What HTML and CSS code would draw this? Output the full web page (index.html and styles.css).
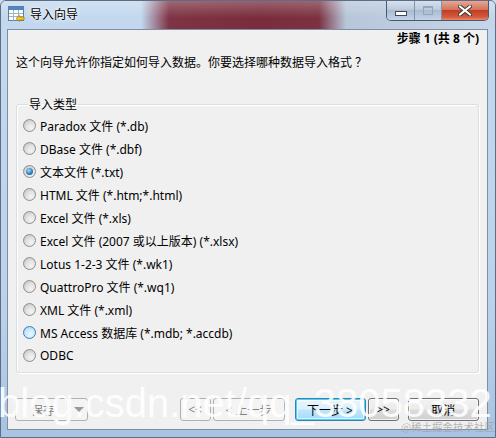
FILE: index.html
```html
<!DOCTYPE html>
<html lang="zh-CN">
  <head>
    <meta charset="UTF-8" />
    <title>导入向导</title>
    <link rel="stylesheet" href="styles.css">
  </head>
  <body>
    <div class="window">
      <!-- Title bar -->
      <div class="titlebar">
        <svg class="app-icon" width="17" height="17" viewBox="0 0 17 17">
          <rect x="0.5" y="0.5" width="15" height="14" fill="#ffffff" stroke="#5f7f9f" />
          <rect x="1" y="1" width="14" height="3" fill="#4a86c8" />
          <path d="M1 7.5H15M1 10.5H15M5.5 4V14.5M10.5 4V14.5" stroke="#9cb4cc" stroke-width="1" />
          <path d="M8 12.5L11.5 9.5V11H16V14H11.5V15.5Z" fill="#f2cc2a" stroke="#a8820a" stroke-width="0.8" />
        </svg>
        <span class="title">导入向导</span>
        <div class="caption-buttons">
          <div class="cap-btn cap-min"><span class="min-glyph"></span></div>
          <div class="cap-btn cap-max"><span class="max-glyph"></span></div>
          <div class="cap-btn cap-close">
            <svg width="14" height="11" viewBox="0 0 14 11">
              <path d="M2 1.5L12 9.5M12 1.5L2 9.5" stroke="#3b3b3b" stroke-width="4" stroke-linecap="square" />
              <path d="M2 1.5L12 9.5M12 1.5L2 9.5" stroke="#ffffff" stroke-width="2" stroke-linecap="square" />
            </svg>
          </div>
        </div>
      </div>

      <!-- Client area -->
      <div class="client">
        <div class="step">步骤 1 (共 8 个)</div>
        <p class="intro">这个向导允许你指定如何导入数据。你要选择哪种数据导入格式<span class="cjk">？</span></p>

        <fieldset class="group">
          <legend>导入类型</legend>
          <div class="option"><span class="radio"></span>Paradox 文件 (*.db)</div>
          <div class="option"><span class="radio"></span>DBase 文件 (*.dbf)</div>
          <div class="option"><span class="radio checked"></span>文本文件 (*.txt)</div>
          <div class="option"><span class="radio"></span>HTML 文件 (*.htm;*.html)</div>
          <div class="option"><span class="radio"></span>Excel 文件 (*.xls)</div>
          <div class="option"><span class="radio"></span>Excel 文件 (2007 或以上版本) (*.xlsx)</div>
          <div class="option"><span class="radio"></span>Lotus 1-2-3 文件 (*.wk1)</div>
          <div class="option"><span class="radio"></span>QuattroPro 文件 (*.wq1)</div>
          <div class="option"><span class="radio"></span>XML 文件 (*.xml)</div>
          <div class="option"><span class="radio hover"></span>MS Access 数据库 (*.mdb; *.accdb)</div>
          <div class="option"><span class="radio"></span>ODBC</div>
        </fieldset>

        <div class="footer">
          <div class="combo disabled">
            <span class="combo-text">保存</span>
            <span class="combo-arrow"></span>
          </div>
          <div class="nav nav-back">
            <div class="btn small disabled">&lt;&lt;</div>
            <div class="btn disabled">&lt; 上一步</div>
          </div>
          <div class="nav nav-next">
            <div class="btn default">下一步 &gt;</div>
            <div class="btn small">&gt;&gt;</div>
          </div>
          <div class="btn cancel">取消</div>
        </div>
      </div>
    </div>

    <!-- Image watermarks -->
    <div class="watermark">blog.csdn.net/qq_38058332</div>
    <div class="juejin">@稀土掘金技术社区</div>
  </body>
</html>
```

FILE: styles.css
```css
body {
  margin: 0;
  width: 496px;
  height: 438px;
  overflow: hidden;
  font-family: "Noto Sans", "Noto Sans CJK SC", sans-serif;
  font-size: 12px;
  color: #000;
  background: #c9dcf0;
  position: relative;
}
.cjk {
  font-family: "Noto Sans CJK SC", sans-serif;
  margin-left: 3px;
}
.window {
  width: 496px;
  height: 438px;
  box-sizing: border-box;
  display: flex;
  flex-direction: column;
  border: 1px solid #5a6f86;
  border-radius: 6px 6px 0 0;
  background: linear-gradient(to bottom, #c5d9ee, #bcd2ea 70%, #a9c3e0);
}
.titlebar {
  height: 28px;
  display: flex;
  align-items: flex-start;
  padding-left: 7px;
  background:
    linear-gradient(to bottom, rgba(255, 255, 255, 0.25), rgba(255, 255, 255, 0) 60%),
    linear-gradient(to right, #c3d8ee 0, #c3d8ee 140px, #7e3444 168px, #7a2c3c 260px, #7c3242 318px, #b7c6d9 345px, #c6d6e8 100%);
  border-radius: 5px 5px 0 0;
}
.app-icon {
  margin-top: 5px;
}
.title {
  margin: 6px 0 0 5px;
  font-size: 12px;
  line-height: 16px;
  text-shadow: 0 0 6px #fff, 0 0 3px #fff;
}
.caption-buttons {
  margin-left: auto;
  margin-right: 6px;
  display: flex;
  height: 19px;
  border: 1px solid #4a5a6e;
  border-top: none;
  border-radius: 0 0 5px 5px;
  overflow: hidden;
}
.cap-btn {
  display: flex;
  align-items: center;
  justify-content: center;
  height: 19px;
  background: linear-gradient(to bottom, #d6e1ee, #bccbdc 45%, #a9bbd1 50%, #c4d4e6);
}
.cap-min {
  width: 27px;
  border-right: 1px solid #7f93ab;
}
.cap-max {
  width: 26px;
  border-right: 1px solid #7f93ab;
}
.cap-close {
  width: 46px;
  background: linear-gradient(to bottom, #e8a695, #d4745d 45%, #c23d22 50%, #d45c3e 85%, #e88a6a);
}
.min-glyph {
  width: 10px;
  height: 3px;
  margin-top: 6px;
  background: #fff;
  border: 1px solid #3e4a58;
}
.max-glyph {
  width: 8px;
  height: 6px;
  border: 1px solid #8c9cb0;
  border-top-width: 2px;
  opacity: 0.8;
}

.client {
  flex: 1;
  margin: 0 7px 7px 6px;
  border: 1px solid #7d8fa5;
  background: #f0f0f0;
  display: flex;
  flex-direction: column;
  padding: 0 8px 8px 8px;
}
.step {
  align-self: flex-end;
  font-weight: bold;
  line-height: 16px;
  margin-top: 1px;
}
.intro {
  margin: 7px 0 0 0;
  line-height: 16px;
}
.group {
  margin: 26px 0 0 0;
  padding: 2px 6px 5px 6px;
  border: 1px solid #d5dfe5;
  border-radius: 3px;
  box-shadow: inset 1px 1px 0 #fff, 1px 1px 0 #fff;
}
.group legend {
  padding: 0 1px;
  margin-left: 5px;
  line-height: 15px;
}
.option {
  display: flex;
  align-items: center;
  gap: 4px;
  height: 23px;
  white-space: nowrap;
}
.radio {
  width: 13px;
  height: 13px;
  box-sizing: border-box;
  border-radius: 50%;
  border: 1px solid #8e8f8f;
  background: radial-gradient(circle at 65% 70%, #f4f4f4, #e2e2e2 45%, #c9c9c9 80%);
  display: flex;
  align-items: center;
  justify-content: center;
}
.radio.checked::after {
  content: "";
  width: 7px;
  height: 7px;
  border-radius: 50%;
  background: radial-gradient(circle at 40% 35%, #a9dcf8, #2a7fc2 55%, #0f4a82);
}
.radio.hover {
  border-color: #3c7fb1;
  background: radial-gradient(circle at 60% 65%, #e9f6fe, #c6e6fb 55%, #9fd1f3 85%);
}

.footer {
  margin-top: auto;
  display: flex;
  align-items: center;
  height: 23px;
}
.combo {
  width: 73px;
  height: 23px;
  box-sizing: border-box;
  margin-left: -1px;
  border: 1px solid #adb2b5;
  border-radius: 3px;
  background: #f4f4f4;
  display: flex;
  align-items: center;
}
.combo-text {
  flex: 1;
  color: #838383;
  padding-left: 15px;
}
.combo-arrow {
  width: 17px;
  height: 21px;
  border-left: 1px solid #c9cdd0;
  position: relative;
}
.combo-arrow::after {
  content: "";
  position: absolute;
  left: 4px;
  top: 8px;
  border-left: 5px solid transparent;
  border-right: 5px solid transparent;
  border-top: 5px solid #9a9a9a;
}
.nav {
  display: flex;
  gap: 2px;
}
.nav-back {
  margin-left: 92px;
}
.nav-next {
  margin-left: 10px;
}
.btn {
  width: 72px;
  height: 23px;
  box-sizing: border-box;
  display: flex;
  align-items: center;
  justify-content: center;
  border: 1px solid #707070;
  border-radius: 3px;
  background: linear-gradient(to bottom, #f2f2f2, #ebebeb 48%, #dddddd 52%, #cfcfcf);
  box-shadow: inset 0 0 0 1px rgba(255, 255, 255, 0.7);
  white-space: nowrap;
}
.btn.small {
  width: 31px;
}
.btn.disabled {
  border-color: #adb2b5;
  background: #f4f4f4;
  color: #838383;
  box-shadow: none;
}
.btn.default {
  width: 71px;
  border-color: #3c7fb1;
  box-shadow: inset 0 0 0 1px #48d3fb, inset 0 0 0 2px rgba(255, 255, 255, 0.6);
  background: linear-gradient(to bottom, #eaf6fd, #d9f0fc 48%, #bee6fd 52%, #a7d9f5);
}
.btn.cancel {
  margin-left: 9px;
}

.watermark {
  position: absolute;
  left: -2px;
  top: 379px;
  font-family: "Liberation Sans", sans-serif;
  font-size: 40px;
  line-height: 48px;
  color: rgba(255, 255, 255, 0.9);
  white-space: nowrap;
}
.juejin {
  position: absolute;
  left: 401px;
  top: 420px;
  font-family: "Noto Sans CJK SC", sans-serif;
  font-size: 10.5px;
  line-height: 14px;
  color: rgba(160, 160, 160, 0.75);
  white-space: nowrap;
}
```
